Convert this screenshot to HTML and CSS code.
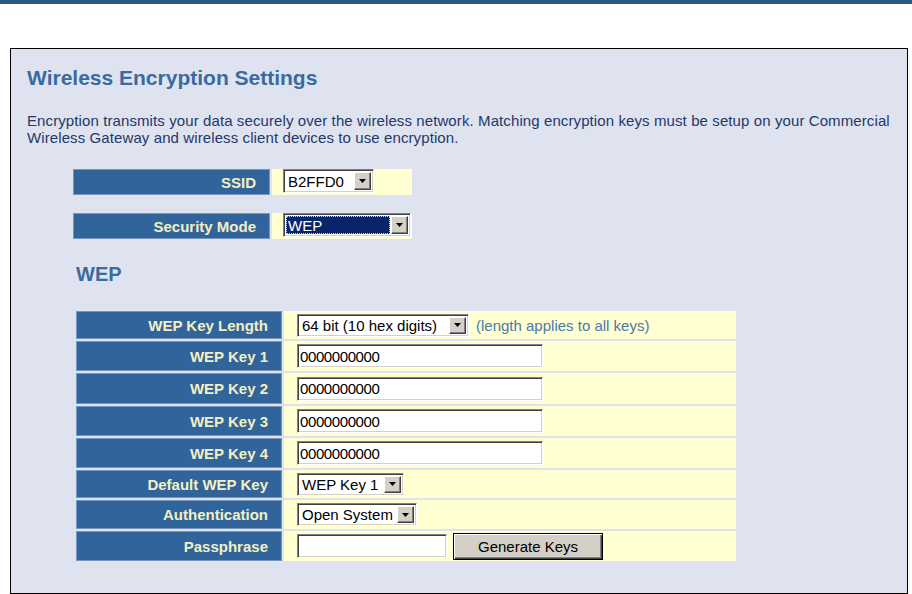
FILE: index.html
```html
<!DOCTYPE html>
<html>
<head>
<meta charset="utf-8">
<title>Wireless Encryption Settings</title>
<link rel="stylesheet" href="styles.css">
</head>
<body>
<div class="topbar"></div>
<div class="panel">
  <h1 class="title">Wireless Encryption Settings</h1>
  <p class="intro">Encryption transmits your data securely over the wireless network. Matching encryption keys must be setup on your Commercial Wireless Gateway and wireless client devices to use encryption.</p>

  <div class="mini first">
    <div class="label">SSID</div>
    <div class="value">
      <span class="sel w-ssid"><select><option>B2FFD0</option></select><span class="arrow"><svg width="7" height="4" viewBox="0 0 7 4"><path d="M0 0H7L3.5 4Z" fill="#000"/></svg></span></span>
    </div>
  </div>

  <div class="mini second">
    <div class="label">Security Mode</div>
    <div class="value">
      <span class="sel w-sec"><select class="hl"><option>WEP</option></select><span class="arrow"><svg width="7" height="4" viewBox="0 0 7 4"><path d="M0 0H7L3.5 4Z" fill="#000"/></svg></span></span>
    </div>
  </div>

  <h2 class="sub">WEP</h2>

  <div class="grid">
    <div class="label">WEP Key Length</div>
    <div class="value">
      <span class="sel w-len"><select><option>64 bit (10 hex digits)</option></select><span class="arrow"><svg width="7" height="4" viewBox="0 0 7 4"><path d="M0 0H7L3.5 4Z" fill="#000"/></svg></span></span>
      <span class="hint">(length applies to all keys)</span>
    </div>

    <div class="label">WEP Key 1</div>
    <div class="value"><input class="txt w-key" type="text" value="0000000000"></div>

    <div class="label">WEP Key 2</div>
    <div class="value"><input class="txt w-key" type="text" value="0000000000"></div>

    <div class="label">WEP Key 3</div>
    <div class="value"><input class="txt w-key" type="text" value="0000000000"></div>

    <div class="label">WEP Key 4</div>
    <div class="value"><input class="txt w-key" type="text" value="0000000000"></div>

    <div class="label">Default WEP Key</div>
    <div class="value">
      <span class="sel w-def"><select><option>WEP Key 1</option></select><span class="arrow"><svg width="7" height="4" viewBox="0 0 7 4"><path d="M0 0H7L3.5 4Z" fill="#000"/></svg></span></span>
    </div>

    <div class="label">Authentication</div>
    <div class="value">
      <span class="sel w-auth"><select><option>Open System</option></select><span class="arrow"><svg width="7" height="4" viewBox="0 0 7 4"><path d="M0 0H7L3.5 4Z" fill="#000"/></svg></span></span>
    </div>

    <div class="label">Passphrase</div>
    <div class="value">
      <input class="txt w-pass" type="text" value="">
      <button class="gen" type="button">Generate Keys</button>
    </div>
  </div>
</div>
</body>
</html>
```
FILE: styles.css
```css
html, body {
  margin: 0;
  padding: 0;
  background: #ffffff;
  font-family: "Liberation Sans", Arial, sans-serif;
}

.topbar {
  height: 4px;
  background: #2b5882;
}

.panel {
  box-sizing: border-box;
  margin: 44px 4px 0 10px;
  height: 546px;
  border: 1px solid #000;
  background: #dfe3ef;
  padding: 17px 8px 0 16px;
}

.title {
  margin: 0;
  font-size: 21px;
  line-height: 24px;
  font-weight: bold;
  color: #3a6a9f;
}

.intro {
  margin: 22px 0 0 0;
  font-size: 15px;
  line-height: 17px;
  letter-spacing: 0.1px;
  color: #24386a;
}

.mini {
  display: grid;
  grid-template-columns: 197px 140px;
  column-gap: 2px;
  height: 26px;
  margin-left: 46px;
}

.mini.first { margin-top: 23px; }
.mini.second { margin-top: 18px; }

.mini .value {
  padding: 0 0 0 11px;
  align-items: flex-start;
}

.label {
  box-sizing: border-box;
  background: #30649a;
  border: 1px solid #7596c0;
  color: #f3efc4;
  font-size: 15px;
  font-weight: bold;
  text-align: right;
  padding-right: 13px;
  display: flex;
  align-items: center;
  justify-content: flex-end;
}

.value {
  box-sizing: border-box;
  background: #ffffd2;
  display: flex;
  align-items: center;
  padding-left: 13px;
}

.sub {
  margin: 23px 0 0 49px;
  font-size: 20px;
  line-height: 24px;
  font-weight: bold;
  color: #3a6a9f;
}

.grid {
  display: grid;
  grid-template-columns: 206px 452px;
  grid-template-rows: 28px 30px 31px 30px 30px 28px 29px 30px;
  gap: 2px;
  margin: 25px 0 0 49px;
  width: 660px;
}

/* Classic inset select */
.sel {
  box-sizing: border-box;
  display: inline-flex;
  height: 24px;
  border: 1px solid;
  border-color: #808080 #ffffff #ffffff #808080;
  box-shadow: inset 1px 1px 0 #404040, inset -1px -1px 0 #d4d0c8;
  background: #ffffff;
  padding: 2px;
}

.sel select {
  -webkit-appearance: none;
  appearance: none;
  flex: 1;
  min-width: 0;
  border: 0;
  margin: 0;
  padding: 0 0 0 2px;
  background: transparent;
  font-family: "Liberation Sans", Arial, sans-serif;
  font-size: 15px;
  color: #000;
  height: 100%;
  outline: none;
}

.sel select.hl {
  background: #0a246a;
  color: #ffffff;
  outline: 1px dotted #d8d8b0;
  outline-offset: -1px;
  margin-right: 1px;
}

.arrow {
  box-sizing: border-box;
  width: 17px;
  height: 100%;
  background: #d4d0c8;
  border: 1px solid;
  border-color: #ffffff #404040 #404040 #ffffff;
  box-shadow: inset -1px -1px 0 #808080;
  display: flex;
  align-items: center;
  justify-content: center;
}

.w-ssid { width: 91px; }
.w-sec { width: 128px; }
.w-len { width: 172px; height: 23px; }
.w-def { width: 107px; height: 23px; }
.w-auth { width: 120px; height: 23px; }

.hint {
  margin-left: 7px;
  font-size: 15px;
  color: #4a7aaa;
}

.txt {
  box-sizing: border-box;
  height: 24px;
  margin: 0;
  border: 1px solid;
  border-color: #808080 #ffffff #ffffff #808080;
  box-shadow: inset 1px 1px 0 #404040, inset -1px -1px 0 #d4d0c8;
  background: #ffffff;
  padding: 0 2px;
  font-family: "Liberation Sans", Arial, sans-serif;
  font-size: 15px;
  letter-spacing: -0.4px;
  color: #000;
  outline: none;
}

.w-key { width: 246px; }
.w-pass { width: 150px; }

.gen {
  box-sizing: border-box;
  width: 150px;
  height: 27px;
  margin: 0 0 0 6px;
  border: 1px solid #000;
  background: #d4d0c8;
  box-shadow: inset 1px 1px 0 #ffffff, inset -1px -1px 0 #404040, inset -2px -2px 0 #808080;
  font-family: "Liberation Sans", Arial, sans-serif;
  font-size: 15px;
  color: #000;
  padding: 0;
}
```
